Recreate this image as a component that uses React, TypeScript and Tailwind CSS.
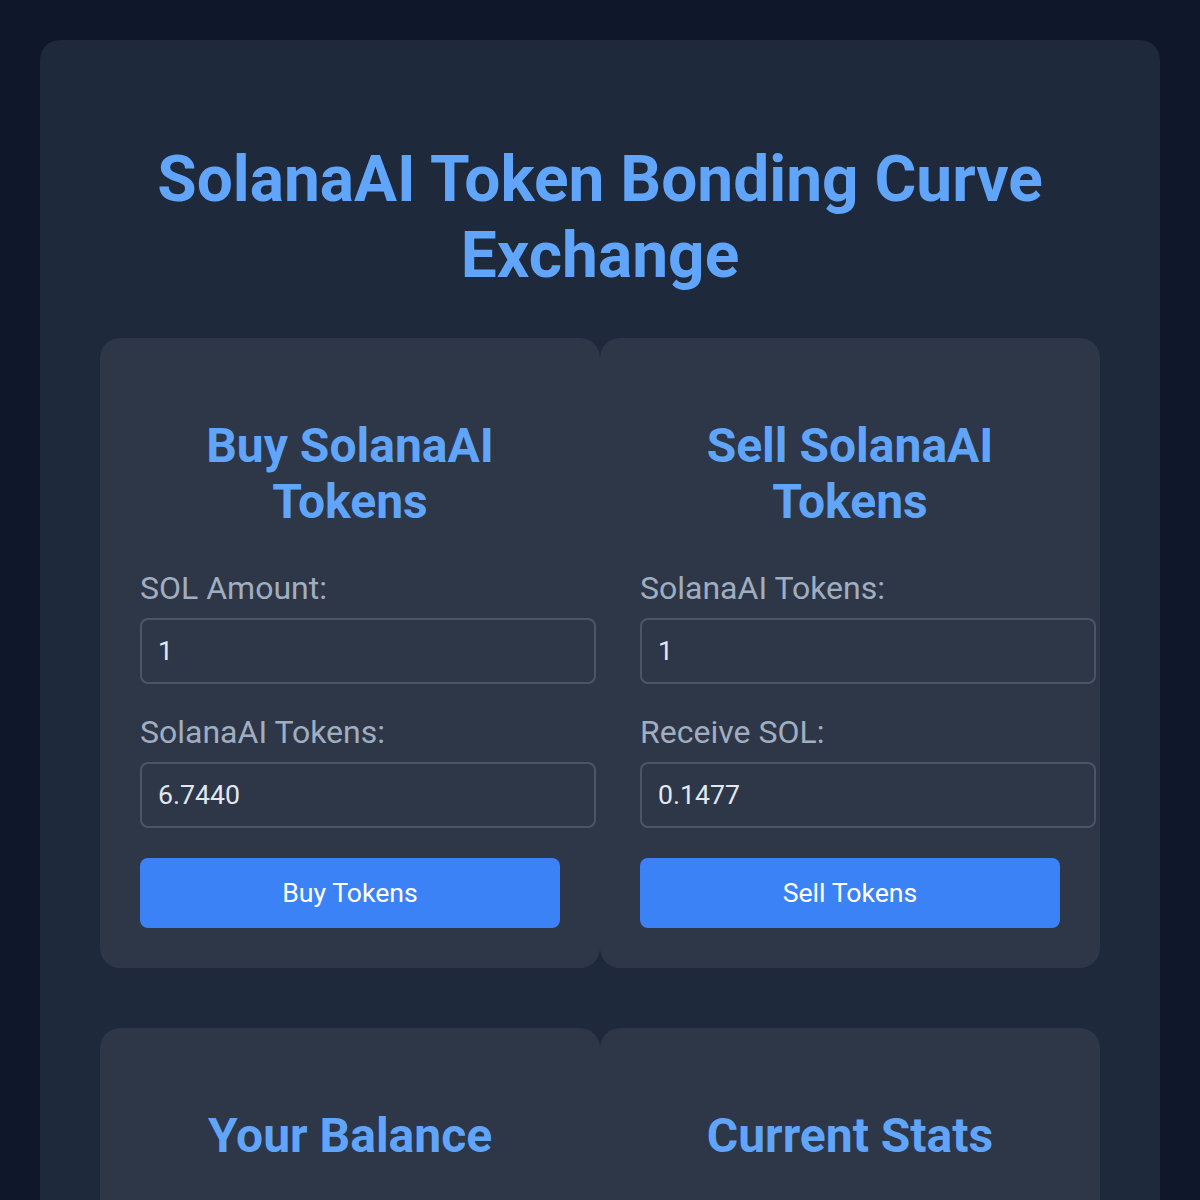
import { useState } from "react";

const font = { fontFamily: "Roboto, 'Liberation Sans', sans-serif" };

function Field({ label, value, onChange, readOnly }: { label: string; value: string; onChange?: (v: string) => void; readOnly?: boolean }) {
  return (
    <div className="mb-[30px]">
      <label className="mb-[11px] block text-[32px] leading-[37px] text-[#a0aec0]">{label}</label>
      <input
        type="text"
        value={value}
        readOnly={readOnly}
        onChange={(e) => onChange?.(e.target.value)}
        className="box-content block h-[30px] w-full rounded-[8px] border-2 border-[#4a5568] bg-[#2d3748] px-[16px] py-[16px] text-[26.67px] text-[#e2e8f0] outline-none"
      />
    </div>
  );
}

function Card({ title, children }: { title: string; children?: React.ReactNode }) {
  return (
    <div className="rounded-[20px] bg-[#2d3748] p-[40px]">
      <h2 className="mx-auto my-[40px] max-w-[300px] text-center text-[48px] font-bold leading-[56px] text-[#60a5fa]">{title}</h2>
      {children}
    </div>
  );
}

export default function App() {
  const [sol, setSol] = useState("1");
  const [tokens, setTokens] = useState("1");

  const buyOut = (parseFloat(sol) || 0) * 6.744;
  const sellOut = (parseFloat(tokens) || 0) * 0.1477;

  return (
    <div className="min-h-[1200px] bg-[#0f172a] p-[40px]" style={font}>
      <div className="rounded-[20px] bg-[#1e293b] px-[60px] pt-[60px] pb-[60px]">
        <h1 className="mx-auto mt-[42px] mb-[44px] max-w-[900px] text-center text-[64px] font-bold leading-[76px] text-[#60a5fa]">
          SolanaAI Token Bonding Curve Exchange
        </h1>

        <div className="grid grid-cols-2">
          <Card title="Buy SolanaAI Tokens">
            <Field label="SOL Amount:" value={sol} onChange={setSol} />
            <Field label="SolanaAI Tokens:" value={buyOut.toFixed(4)} readOnly />
            <button className="h-[70px] w-full rounded-[8px] bg-[#3b82f6] text-[26.67px] text-white">Buy Tokens</button>
          </Card>
          <Card title="Sell SolanaAI Tokens">
            <Field label="SolanaAI Tokens:" value={tokens} onChange={setTokens} />
            <Field label="Receive SOL:" value={sellOut.toFixed(4)} readOnly />
            <button className="h-[70px] w-full rounded-[8px] bg-[#3b82f6] text-[26.67px] text-white">Sell Tokens</button>
          </Card>
        </div>

        <div className="mt-[60px] grid grid-cols-2">
          <Card title="Your Balance">
            <p className="mb-[16px] text-[32px] text-[#e2e8f0]">SOL: 10.0000</p>
            <p className="text-[32px] text-[#e2e8f0]">SolanaAI: 0.0000</p>
          </Card>
          <Card title="Current Stats">
            <p className="mb-[16px] text-[32px] text-[#e2e8f0]">Price: 0.1483 SOL</p>
            <p className="text-[32px] text-[#e2e8f0]">Supply: 1000.0000</p>
          </Card>
        </div>
      </div>
    </div>
  );
}
